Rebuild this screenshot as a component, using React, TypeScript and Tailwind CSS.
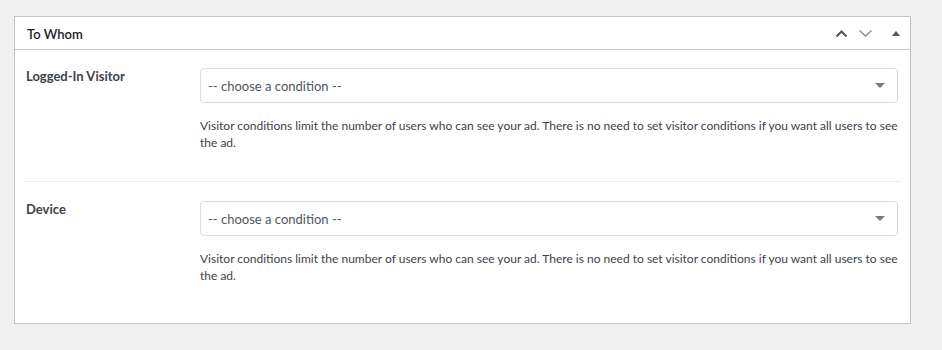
export default function App() {
  const rows = ["Logged-In Visitor", "Device"];
  return (
    <div className="min-h-[350px] w-[942px] bg-[#f0f0f1] pt-4 pl-[14px] font-['Lato',sans-serif] text-[13px] text-[#3c434a]">
      <div className="w-[897px] border border-[#c3c4c7] bg-white">
        <div className="flex h-[33px] items-center border-b border-[#c3c4c7] pl-3 pr-[10px]">
          <h2 className="flex-1 pt-[3px] text-[13px] font-semibold text-[#1d2327]">To Whom</h2>
          <div className="flex items-center gap-[10px]">
            <svg width="13" height="9" viewBox="0 0 13 9" fill="none">
              <path d="M1.5 7.5L6.5 2.5L11.5 7.5" stroke="#50575e" strokeWidth="2" />
            </svg>
            <svg width="15" height="9" viewBox="0 0 15 9" fill="none">
              <path d="M1.5 1.5L7.5 7L13.5 1.5" stroke="#8c8f94" strokeWidth="1.6" />
            </svg>
            <svg width="8" height="6" viewBox="0 0 8 6" className="ml-[9px]">
              <path d="M0 6L4 1L8 6Z" fill="#50575e" />
            </svg>
          </div>
        </div>
        <div className="px-[9px] pt-[18px] pb-[39px]">
          {rows.map((label, i) => (
            <div
              key={label}
              className={
                i === 0
                  ? "flex border-b border-[#eeeeee] pb-[30px]"
                  : "flex pt-[19px]"
              }
            >
              <div className="w-[176px] pl-[2px] text-[13px] leading-[16px] font-bold text-[#3c434a]">
                {label}
              </div>
              <div className="w-[698px]">
                <div className="flex h-[35px] items-center rounded-[4px] border border-[#dcdcde] bg-white pl-[7px] pr-[12px] text-[13px] text-[#50575e]">
                  <span className="flex-1 pt-[3px]">-- choose a condition --</span>
                  <svg width="10" height="6" viewBox="0 0 10 6">
                    <path d="M0 0H10L5 5Z" fill="#787c82" />
                  </svg>
                </div>
                <p className="mt-[14px] text-[12px] leading-[17px] text-[#3c434a]">
                  Visitor conditions limit the number of users who can see your ad. There is no need to set visitor conditions if you want all users to see the ad.
                </p>
              </div>
            </div>
          ))}
        </div>
      </div>
    </div>
  );
}
